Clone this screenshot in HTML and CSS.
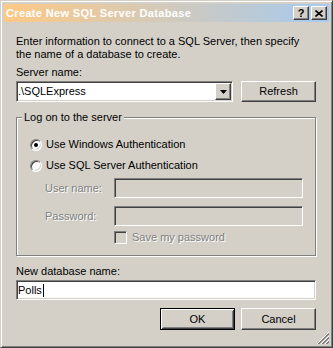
FILE: index.html
```html
<!DOCTYPE html>
<html lang="en">
<head>
    <meta charset="UTF-8">
    <title>Create New SQL Server Database</title>
    <link rel="stylesheet" href="styles.css">
</head>
<body>
    <div class="window">
        <div class="titlebar">
            <span class="title">Create New SQL Server Database</span>
            <span class="cap-btn help">?</span>
            <span class="cap-btn">
                <svg width="8" height="7" viewBox="0 0 8 7"><path d="M0.5 0.5L7.5 6.5M7.5 0.5L0.5 6.5" stroke="#000" stroke-width="1.6"/></svg>
            </span>
        </div>

        <div class="content">
            <p class="intro">Enter information to connect to a SQL Server, then specify<br>the name of a database to create.</p>

            <div class="label">Server name:</div>
            <div class="server-row">
                <div class="combo sunken">
                    <span class="combo-text">.\SQLExpress</span>
                    <span class="combo-arrow raised">
                        <svg width="7" height="4" viewBox="0 0 7 4"><polygon points="0,0 7,0 3.5,4" fill="#000"/></svg>
                    </span>
                </div>
                <div class="btn raised">Refresh</div>
            </div>

            <div class="group">
                <div class="group-title">Log on to the server</div>
                <div class="radio-row first"><span class="radio checked"></span>Use Windows Authentication</div>
                <div class="radio-row"><span class="radio"></span>Use SQL Server Authentication</div>
                <div class="field-row user-row">
                    <span class="field-label disabled">User name:</span>
                    <div class="textbox sunken off"></div>
                </div>
                <div class="field-row pass-row">
                    <span class="field-label disabled">Password:</span>
                    <div class="textbox sunken off"></div>
                </div>
                <div class="check-row">
                    <span class="checkbox sunken"></span>
                    <span class="disabled">Save my password</span>
                </div>
            </div>

            <div class="label db-label">New database name:</div>
            <div class="textbox sunken name-box">Polls<span class="caret"></span></div>

            <div class="actions">
                <div class="btn default">OK</div>
                <div class="btn raised">Cancel</div>
            </div>
        </div>

        <svg class="grip" width="12" height="12" viewBox="0 0 12 12" shape-rendering="crispEdges">
            <path d="M12 0L0 12M12 4L4 12M12 8L8 12" stroke="#fff"/>
            <path d="M12 1L1 12M12 2L2 12M12 5L5 12M12 6L6 12M12 9L9 12M12 10L10 12" stroke="#808080"/>
        </svg>
    </div>
</body>
</html>
```

FILE: styles.css
```css
body {
    margin: 0;
    background-color: #d4d0c8;
    font-family: "Liberation Sans", Arial, sans-serif;
    font-size: 11px;
    line-height: 13px;
    color: #000;
}

.window {
    position: relative;
    width: 333px;
    height: 348px;
    box-sizing: border-box;
    padding: 3px;
    border: 1px solid;
    border-color: #d4d0c8 #404040 #404040 #d4d0c8;
    box-shadow: inset 1px 1px #fff, inset -1px -1px #808080;
}

/* caption */
.titlebar {
    height: 18px;
    display: flex;
    align-items: center;
    padding: 0 2px;
    background: linear-gradient(to right, #fdc985, #a6caf0);
}

.title {
    flex: 1;
    color: #fff;
    font-weight: bold;
    letter-spacing: 0.35px;
}

.raised,
.cap-btn {
    background-color: #d4d0c8;
    border: 1px solid;
    border-color: #fff #404040 #404040 #fff;
    box-shadow: inset -1px -1px #808080, inset 1px 1px #d4d0c8;
}

.sunken {
    border: 1px solid;
    border-color: #808080 #fff #fff #808080;
    box-shadow: inset 1px 1px #404040, inset -1px -1px #d4d0c8;
}

.cap-btn {
    width: 16px;
    height: 14px;
    box-sizing: border-box;
    display: flex;
    align-items: center;
    justify-content: center;
    font-weight: bold;
    font-size: 11px;
}

.help {
    margin-right: 2px;
}

/* body */
.content {
    padding: 13px 13px 0 12px;
}

.intro {
    margin: 0;
}

.label {
    margin-top: 5px;
}

.server-row {
    display: flex;
    gap: 8px;
    margin-top: 2px;
}

.combo {
    width: 217px;
    height: 21px;
    box-sizing: border-box;
    display: flex;
    align-items: center;
    background-color: #fff;
    padding: 0 1px 0 1px;
}

.combo-text {
    flex: 1;
}

.combo-arrow {
    width: 16px;
    height: 17px;
    box-sizing: border-box;
    display: flex;
    align-items: center;
    justify-content: center;
}

.btn {
    width: 75px;
    height: 21px;
    box-sizing: border-box;
    display: flex;
    align-items: center;
    justify-content: center;
}

/* group box */
.group {
    margin-top: 15px;
    border: 1px solid #808080;
    box-shadow: inset 1px 1px #fff, 1px 1px #fff;
    padding: 0 12px 11px 13px;
}

.group-title {
    width: fit-content;
    margin: -7px 0 0 -8px;
    padding: 0 2px;
    background-color: #d4d0c8;
}

.radio-row {
    display: flex;
    align-items: center;
    height: 13px;
    margin-top: 8px;
}

.radio-row.first {
    margin-top: 14px;
}

.radio {
    width: 12px;
    height: 12px;
    box-sizing: border-box;
    margin-right: 4px;
    border-radius: 50%;
    border: 1px solid;
    border-color: #808080 #fff #fff #808080;
    box-shadow: inset 1px 1px #404040, inset -1px -1px #d4d0c8;
    background-color: #fff;
    display: flex;
    align-items: center;
    justify-content: center;
}

.radio.checked::after {
    content: "";
    width: 4px;
    height: 4px;
    border-radius: 50%;
    background-color: #000;
}

.field-row {
    display: flex;
    align-items: center;
}

.user-row {
    margin-top: 6px;
}

.pass-row {
    margin-top: 8px;
}

.field-label {
    width: 69px;
    margin-left: 15px;
}

.disabled {
    color: #808080;
    text-shadow: 1px 1px 0 #fff;
}

.textbox {
    flex: 1;
    height: 20px;
    box-sizing: border-box;
    display: flex;
    align-items: center;
    background-color: #fff;
}

.textbox.off {
    background-color: #d4d0c8;
}

.check-row {
    display: flex;
    align-items: center;
    height: 13px;
    margin-top: 5px;
    padding-left: 84px;
}

.checkbox {
    width: 13px;
    height: 13px;
    box-sizing: border-box;
    margin-right: 5px;
    background-color: #d4d0c8;
}

.db-label {
    margin-top: 9px;
}

.name-box {
    margin-top: 2px;
    padding-left: 1px;
}

.caret {
    width: 1px;
    height: 13px;
    margin-left: 1px;
    background-color: #000;
}

.actions {
    display: flex;
    justify-content: flex-end;
    gap: 6px;
    margin-top: 8px;
}

.actions .btn {
    height: 22px;
}

.btn.default {
    border: 1px solid #000;
    background-color: #d4d0c8;
    box-shadow: inset 1px 1px #fff, inset -1px -1px #404040, inset 2px 2px #d4d0c8, inset -2px -2px #808080;
}

/* resize grip sits over the window corner */
.grip {
    position: absolute;
    right: 3px;
    bottom: 3px;
}
```
